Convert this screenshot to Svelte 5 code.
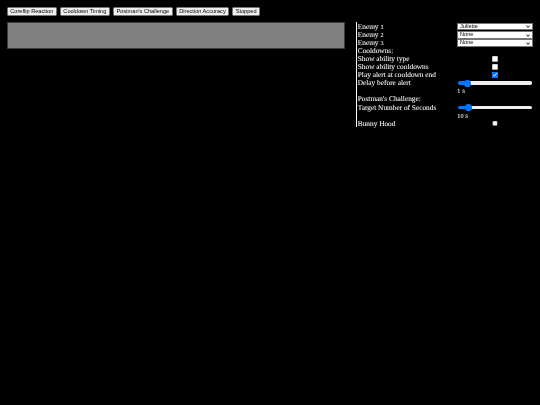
<script>
  const tabs = ["Coreflip Reaction", "Cooldown Timing", "Postman's Challenge", "Direction Accuracy", "Stopped"];
</script>

<div class="page">
  <nav class="tabs">
    {#each tabs as t}
      <button>{t}</button>
    {/each}
  </nav>
  <div class="main">
    <div class="stage"></div>
    <div class="panel">
      <div class="row"><span class="t">Enemy <span class="n">1</span></span><select><option>Juliette</option></select></div>
      <div class="row"><span class="t">Enemy <span class="n">2</span></span><select><option>None</option></select></div>
      <div class="row"><span class="t">Enemy <span class="n">3</span></span><select><option>None</option></select></div>
      <div class="row"><span class="t">Cooldowns:</span></div>
      <div class="row"><span class="t">Show ability type</span><span class="c"><input type="checkbox" /></span></div>
      <div class="row"><span class="t">Show ability cooldowns</span><span class="c"><input type="checkbox" /></span></div>
      <div class="row"><span class="t">Play alert at cooldown end</span><span class="c"><input type="checkbox" checked /></span></div>
      <div class="row"><span class="t">Delay before alert</span><input class="range" type="range" min="0" max="12" value="1" style="--p: 11%" /></div>
      <div class="row"><span></span><span class="t"><span class="n">1</span> s</span></div>
      <div class="row"><span class="t">Postman's Challenge:</span></div>
      <div class="row"><span class="t">Target Number of Seconds</span><input class="range" type="range" min="0" max="100" value="10" style="--p: 13%" /></div>
      <div class="row"><span></span><span class="t"><span class="n">10</span> s</span></div>
      <div class="row"><span class="t">Bunny Hood</span><span class="c"><input type="checkbox" /></span></div>
    </div>
  </div>
</div>

<style>
  :global(body) {
    margin: 0;
    background: #000;
  }
  .page {
    zoom: 0.4219;
    width: 1280px;
    height: 960px;
    box-sizing: border-box;
    padding: 16px;
    background: #000;
    color: #fff;
    font-family: "Liberation Serif", serif;
    font-size: 17.4px;
    text-rendering: geometricPrecision;
  }
  .tabs {
    display: flex;
    gap: 7px;
    will-change: opacity;
  }
  button {
    font-family: "Liberation Sans", sans-serif;
    font-size: 13.33px;
    height: 21px;
    margin: 0;
    padding: 1px 6px;
    white-space: nowrap;
  }
  .main {
    display: flex;
    align-items: flex-start;
    margin-top: 15px;
  }
  .stage {
    width: 802px;
    height: 65px;
    box-sizing: border-box;
    background: #808080;
    border: 1px solid #404040;
  }
  .panel {
    margin-left: 27px;
    border-left: 2px solid #fff;
    padding: 1px 0 0 2px;
    will-change: opacity;
  }
  .row {
    display: grid;
    grid-template-columns: 236px 180px;
    height: 19.15px;
    line-height: 19.15px;
    align-items: center;
    white-space: nowrap;
  }
  .t {
    padding-top: 1px;
    -webkit-text-stroke: 0.1px #fff;
  }
  .n { font-size: 84%; }
  .c { display: flex; justify-content: center; }
  input[type="checkbox"] {
    width: 13.5px;
    height: 13.5px;
    margin: 0;
  }
  select {
    appearance: none;
    width: 180px;
    height: 18px;
    margin: -2px 0 0;
    padding: 0 0 0 4px;
    border: 1px solid #767676;
    border-radius: 0;
    font-family: "Liberation Sans", sans-serif;
    font-size: 13.33px;
    line-height: 14px;
    box-sizing: border-box;
    color: #000;
    background: #fff url("data:image/svg+xml,%3Csvg xmlns='http://www.w3.org/2000/svg' width='10' height='6'%3E%3Cpath d='M1 1l4 4 4-4' fill='none' stroke='%23000' stroke-width='2'/%3E%3C/svg%3E") no-repeat right 5px center;
  }
  .range {
    appearance: none;
    width: 175px;
    height: 16px;
    margin: 0 0 0 2px;
    background: transparent;
  }
  .range::-webkit-slider-runnable-track {
    height: 8px;
    border-radius: 4px;
    background: linear-gradient(to right, #0075ff var(--p), #efefef var(--p));
  }
  .range::-webkit-slider-thumb {
    appearance: none;
    width: 16px;
    height: 16px;
    margin-top: -4px;
    border-radius: 50%;
    background: #0075ff;
  }
</style>
